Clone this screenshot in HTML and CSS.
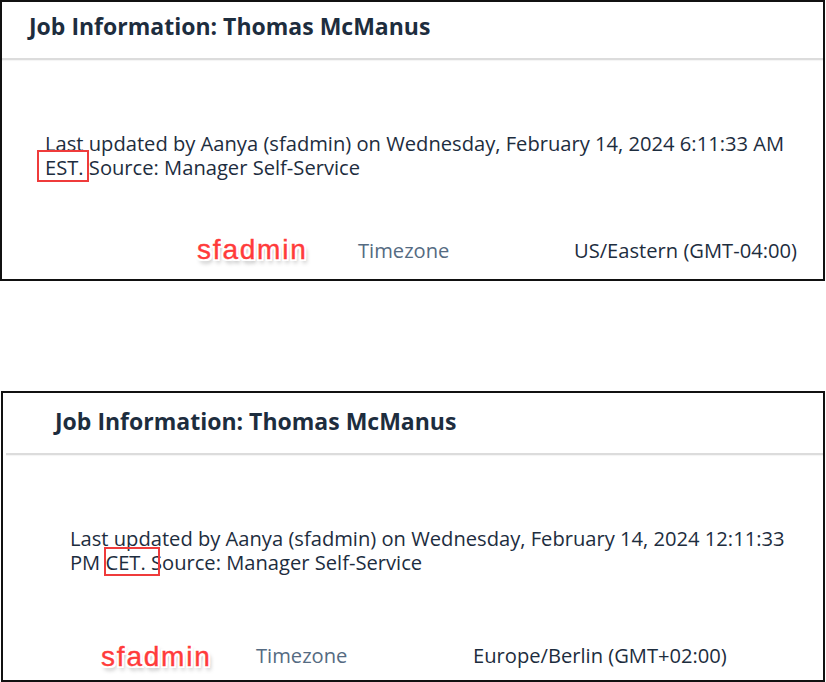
FILE: index.html
```html
<!DOCTYPE html>
<html lang="en">
<head>
<meta charset="utf-8">
<title>Job Information</title>
<link rel="stylesheet" href="styles.css">
</head>
<body>
  <section class="shot shot--est">
    <header class="shot-head">
      <h1 class="shot-title">Job Information: Thomas McManus</h1>
    </header>
    <div class="shot-body">
      <p class="updated">Last updated by Aanya (sfadmin) on Wednesday, February 14, 2024 6:11:33 AM <span class="mark mark--est">EST.</span> Source: Manager Self-Service</p>
      <div class="field-row">
        <span class="callout">sfadmin</span>
        <span class="field-label">Timezone</span>
        <span class="field-value">US/Eastern (GMT-04:00)</span>
      </div>
    </div>
  </section>

  <section class="shot shot--cet">
    <header class="shot-head">
      <h1 class="shot-title">Job Information: Thomas McManus</h1>
    </header>
    <div class="shot-body">
      <p class="updated">Last updated by Aanya (sfadmin) on Wednesday, February 14, 2024 12:11:33 PM <span class="mark mark--cet">CET.</span> Source: Manager Self-Service</p>
      <div class="field-row">
        <span class="callout">sfadmin</span>
        <span class="field-label">Timezone</span>
        <span class="field-value">Europe/Berlin (GMT+02:00)</span>
      </div>
    </div>
  </section>
</body>
</html>
```

FILE: styles.css
```css
* {
  box-sizing: border-box;
}

html, body {
  margin: 0;
  padding: 0;
  background: #ffffff;
}

body {
  width: 826px;
  height: 682px;
  overflow: hidden;
  font-family: "Open Sans", "Noto Sans", "Liberation Sans", sans-serif;
  color: #1d2d3e;
}

.shot {
  background: #ffffff;
  border: 2px solid #111111;
  display: flex;
  flex-direction: column;
}

.shot--est {
  width: 825px;
  height: 281px;
}

.shot--cet {
  width: 824px;
  height: 291px;
  margin: 110px 0 0 1px;
}

/* header */
.shot-head {
  border-bottom: 2px solid #dcdcdc;
  box-shadow: 0 1px 1px rgba(0, 0, 0, 0.04);
}

.shot--est .shot-head {
  padding: 8px 0 16px 27px;
}

.shot--cet .shot-head {
  margin-left: 3px;
  padding: 12px 0 16px 49px;
}

.shot-title {
  margin: 0;
  font-size: 23px;
  line-height: 32px;
  font-weight: 700;
  color: #1d2d3e;
}

/* body */
.shot-body {
  padding-top: 71px;
  padding-right: 24px;
}

.shot--est .shot-body {
  padding-left: 43px;
}

.shot--cet .shot-body {
  padding-left: 67px;
}

.updated {
  margin: 0;
  font-size: 20.15px;
  line-height: 24px;
  color: #1d2d3e;
}

.mark {
  position: relative;
}

.mark::before {
  content: "";
  position: absolute;
  border: 2.5px solid #ef3b3b;
}

.mark--est::before {
  left: -8px;
  right: -5px;
  top: -3px;
  bottom: -1px;
}

.mark--cet::before {
  left: -1px;
  right: -14px;
  top: -1px;
  bottom: 0;
}

/* field row */
.field-row {
  position: relative;
  display: flex;
  font-size: 20.15px;
  line-height: 24px;
}

.shot--est .field-row {
  margin-top: 59px;
  padding-left: 313px;
}

.shot--cet .field-row {
  margin-top: 69px;
  padding-left: 186px;
}

.field-label {
  color: #556b82;
}

.shot--est .field-label {
  width: 216px;
}

.shot--cet .field-label {
  width: 217px;
}

.field-value {
  color: #1d2d3e;
}

.callout {
  position: absolute;
  font-family: "Liberation Sans", Arial, sans-serif;
  font-size: 28px;
  line-height: 28px;
  letter-spacing: 1.8px;
  color: #ff3b3b;
  -webkit-text-stroke: 0.4px #ff3b3b;
  text-shadow:
    1px 0 0 #fff, -1px 0 0 #fff, 0 1px 0 #fff, 0 -1px 0 #fff,
    2px 2px 0 #fff, -2px -2px 0 #fff, 2px -2px 0 #fff, -2px 2px 0 #fff,
    2px 0 0 #fff, -2px 0 0 #fff, 0 2px 0 #fff, 0 -2px 0 #fff,
    2px 4px 4px rgba(0, 0, 0, 0.35);
}

.shot--est .callout {
  left: 152px;
  top: -2px;
}

.shot--cet .callout {
  left: 31px;
  top: 0;
}
```
